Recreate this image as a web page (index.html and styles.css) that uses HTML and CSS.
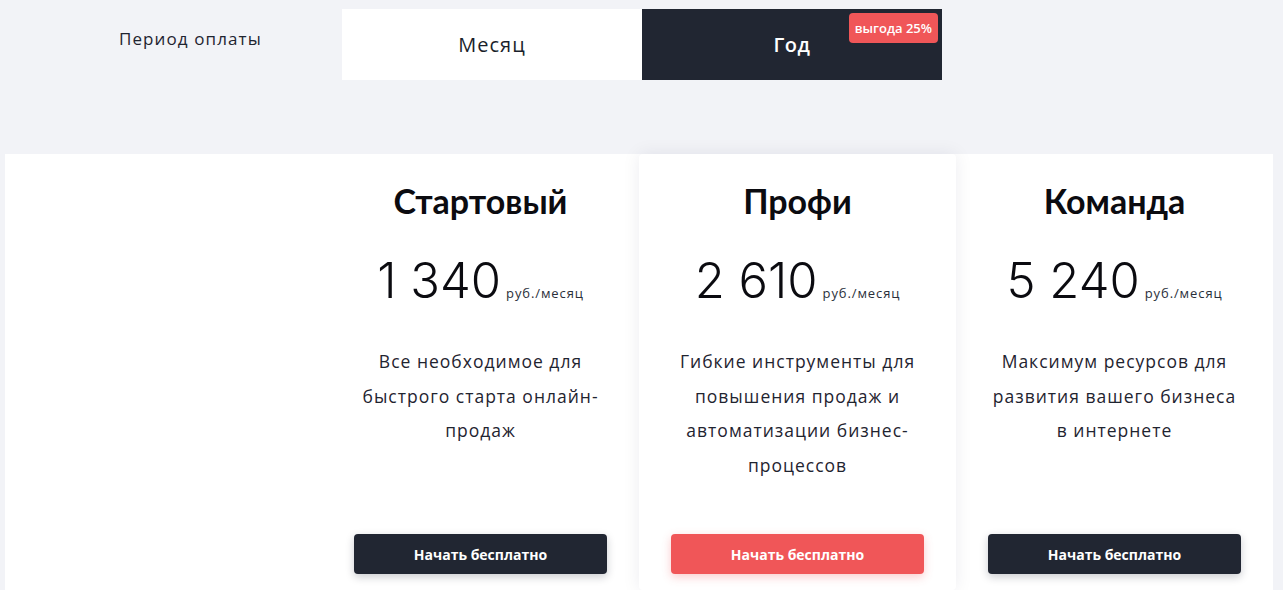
FILE: index.html
```html
<!DOCTYPE html>
<html lang="ru">
<head>
<meta charset="utf-8">
<title>Тарифы</title>
<link rel="stylesheet" href="styles.css">
</head>
<body>
<div class="page">
  <div class="period-row">
    <div class="period-label">Период оплаты</div>
    <div class="tabs">
      <div class="tab">Месяц</div>
      <div class="tab tab-active">Год<span class="badge">выгода 25%</span></div>
    </div>
  </div>

  <div class="plans">
    <div class="plan-col plan-label-col"></div>
    <div class="plan-col">
      <h2 class="plan-title">Стартовый</h2>
      <div class="plan-price"><span class="price-num">1 340</span><span class="price-unit">руб./месяц</span></div>
      <p class="plan-desc">Все необходимое для<br>быстрого старта онлайн-<br>продаж</p>
      <button class="plan-btn">Начать бесплатно</button>
    </div>
    <div class="plan-col plan-featured">
      <h2 class="plan-title">Профи</h2>
      <div class="plan-price"><span class="price-num">2 610</span><span class="price-unit">руб./месяц</span></div>
      <p class="plan-desc">Гибкие инструменты для<br>повышения продаж и<br>автоматизации бизнес-<br>процессов</p>
      <button class="plan-btn plan-btn-red">Начать бесплатно</button>
    </div>
    <div class="plan-col">
      <h2 class="plan-title">Команда</h2>
      <div class="plan-price"><span class="price-num">5 240</span><span class="price-unit">руб./месяц</span></div>
      <p class="plan-desc">Максимум ресурсов для<br>развития вашего бизнеса<br>в интернете</p>
      <button class="plan-btn">Начать бесплатно</button>
    </div>
  </div>
</div>
</body>
</html>
```

FILE: styles.css
```css
* { box-sizing: border-box; }
html, body { margin: 0; padding: 0; }
body {
  background: #f2f3f7;
  font-family: "Open Sans", "DejaVu Sans", sans-serif;
  color: #1f2430;
  overflow: hidden;
}
.page {
  width: 1283px;
  height: 590px;
}
.period-row {
  display: flex;
  padding-top: 9px;
}
.period-label {
  width: 342px;
  padding-left: 119px;
  padding-top: 18px;
  font-size: 17px;
  line-height: 24px;
  letter-spacing: 1.1px;
  color: #1f2430;
}
.tabs {
  display: flex;
  width: 600px;
  height: 71px;
}
.tab {
  position: relative;
  flex: 1;
  display: flex;
  align-items: center;
  justify-content: center;
  background: #ffffff;
  font-size: 20px;
  letter-spacing: 1px;
  color: #1a1f2b;
}
.tab-active {
  background: #212632;
  color: #ffffff;
  font-weight: 600;
  letter-spacing: 0.5px;
}
.badge {
  position: absolute;
  top: 4px;
  right: 4px;
  height: 30px;
  padding: 0 6px;
  display: flex;
  align-items: center;
  background: #f05658;
  color: #fff;
  border-radius: 4px;
  font-size: 13px;
  font-weight: 600;
  letter-spacing: 0;
}
.plans {
  display: flex;
  margin-top: 74px;
  margin-left: 5px;
  width: 1268px;
  height: 436px;
  background: #ffffff;
}
.plan-col {
  width: 317px;
  padding: 24px 32px 0;
  display: flex;
  flex-direction: column;
  align-items: center;
  background: #ffffff;
}
.plan-featured {
  position: relative;
  z-index: 1;
  border-radius: 4px;
  box-shadow: 0 0 18px rgba(20, 30, 60, 0.08);
}
.plan-title {
  margin: 0;
  font-family: "Lato", "Open Sans", sans-serif;
  font-weight: 700;
  font-size: 34px;
  line-height: 46px;
  color: #0b0b10;
}
.plan-price {
  margin-top: 27px;
  display: flex;
  align-items: baseline;
  height: 60px;
  line-height: 60px;
}
.price-num {
  font-family: "Inter", sans-serif;
  font-weight: 300;
  font-size: 49px;
  color: #0b0b10;
}
.price-unit {
  margin-left: 5px;
  font-size: 13px;
  letter-spacing: 0.9px;
  color: #2a2f3a;
}
.plan-desc {
  margin: 33px 0 0;
  height: 190px;
  font-size: 17.5px;
  line-height: 34.5px;
  letter-spacing: 1px;
  text-align: center;
  white-space: nowrap;
  color: #1f2430;
}
.plan-btn {
  width: 253px;
  height: 40px;
  flex: none;
  border: 0;
  border-radius: 4px;
  background: #212632;
  color: #ffffff;
  font-family: "Open Sans", sans-serif;
  font-weight: 700;
  font-size: 14px;
  box-shadow: 0 3px 8px rgba(20, 25, 40, 0.22);
  cursor: pointer;
}
.plan-btn-red {
  background: #f05658;
  box-shadow: 0 3px 10px rgba(240, 86, 88, 0.3);
}
```
